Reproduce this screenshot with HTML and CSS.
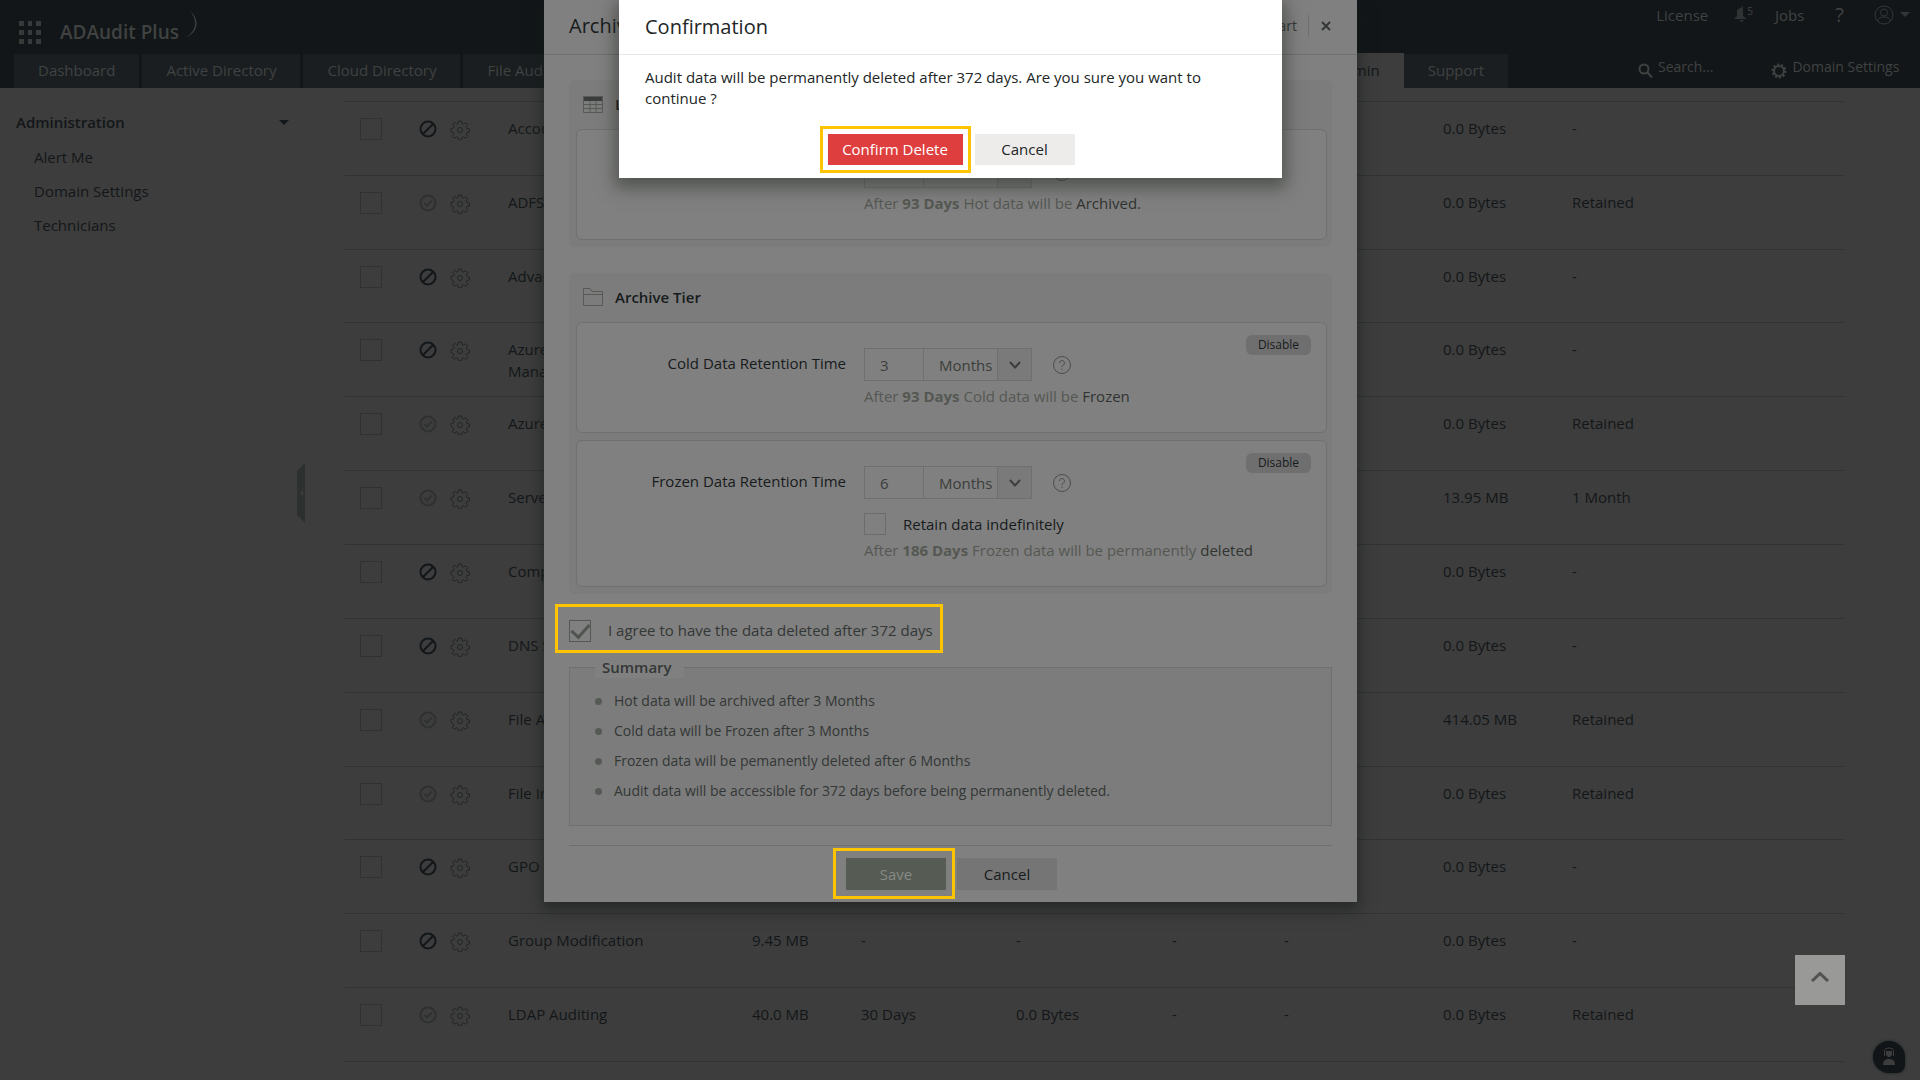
FILE: index.html
```html
<!DOCTYPE html>
<html lang="en">
<head>
  <meta charset="UTF-8">
  <meta name="viewport" content="width=device-width, initial-scale=1.0">
  <title>ADAudit Plus</title>
  <link rel="stylesheet" href="styles.css">
</head>
<body>
  <svg class="sprite" width="0" height="0">
    <symbol id="blocked" viewBox="0 0 18 18"><circle cx="9" cy="9" r="7.5"/><path d="M4.2 13.8L13.8 4.2"/></symbol>
    <symbol id="checked" viewBox="0 0 18 18"><circle cx="9" cy="9" r="7.5"/><path d="M5.5 9l2.5 2.5 5-5"/></symbol>
    <symbol id="gear" viewBox="0 0 20 20"><path d="M8.5 1h3l.5 2.5 1.6.7 2.2-1.5 2 2-1.5 2.2.7 1.6 2.4.5v3l-2.4.5-.7 1.6 1.5 2.2-2 2-2.2-1.5-1.6.7-.5 2.4h-3l-.5-2.4-1.6-.7-2.2 1.5-2-2 1.5-2.2-.7-1.6L1 11.500V8.500L3.500 8l.7-1.6L2.700 4.200l2-2L6.900 4.200 8 3.500z"/><circle cx="10" cy="10" r="2.500"/></symbol>
    <symbol id="chevron" viewBox="0 0 14 10"><path d="M2 2l5 5.500L12 2"/></symbol>
    <symbol id="help" viewBox="0 0 20 20"><circle cx="10" cy="10" r="8.500"/><path d="M7.500 8a2.500 2.500 0 1 1 3.700 2.200c-.8.5-1.200.9-1.200 1.800M10 13.500v1.500"/></symbol>
  </svg>

  <header class="header">
    <div class="top">
      <button class="apps" aria-label="Apps">
        <svg width="24" height="24" viewBox="0 0 24 24"><path d="M1 1h5v5H1zM10 1h4v5h-4zM18 1h5v5h-5zM1 10h5v5H1zM10 10h4v5h-4zM18 10h5v5h-5zM1 19h5v5H1zM10 19h4v5h-4zM18 19h5v5h-5z"/></svg>
      </button>
      <a class="logo" href="#">ADAudit Plus<svg width="14" height="28" viewBox="0 0 14 28"><path d="M7 0c10 8 9 22-6 27 13-6 14-18 6-27z"/></svg></a>
      <div class="user-links">
        <a href="#">License</a>
        <a class="bell" href="#" aria-label="Notifications">
          <svg width="18" height="17" viewBox="0 0 18 17"><path d="M0 13l3-3V6c0-3 2-4 4-4l2-2v10l4 3zM5 14h5l-2 2z"/></svg><sup>5</sup>
        </a>
        <a class="jobs" href="#">Jobs</a>
        <a class="question" href="#">?</a>
        <button class="account" aria-label="Account">
          <svg width="20" height="20" viewBox="0 0 20 20"><circle cx="10" cy="10" r="9"/><circle cx="10" cy="7.500" r="3.500"/><path d="M3.500 16c1-3 3-4 6.500-4s5.500 1 6.500 4"/></svg>
          <span class="caret"></span>
        </button>
      </div>
    </div>
    <div class="bar">
      <nav class="tabs">
        <a href="#">Dashboard</a>
        <a href="#">Active Directory</a>
        <a href="#">Cloud Directory</a>
        <a href="#">File Audit</a>
        <a class="active" href="#">Admin</a>
        <a href="#">Support</a>
      </nav>
      <div class="tools">
        <a href="#"><svg width="15" height="15" viewBox="0 0 15 15"><circle cx="6" cy="6" r="4.500"/><path d="M9.500 9.500l4.500 5"/></svg>Search...</a>
        <a href="#"><svg width="16" height="16" viewBox="0 0 16 16"><circle cx="8" cy="8" r="5"/><circle class="teeth" cx="8" cy="8" r="6.500"/></svg>Domain Settings</a>
      </div>
    </div>
  </header>

  <div class="page">
    <aside class="sidebar">
      <h2>Administration <span class="caret"></span></h2>
      <ul>
        <li><a href="#">Alert Me</a></li>
        <li><a href="#">Domain Settings</a></li>
        <li><a href="#">Technicians</a></li>
      </ul>
      <button class="collapse" aria-label="Collapse"><svg width="8" height="60" viewBox="0 0 8 60"><path d="M8 0v60L0 52V8z"/><path class="mark" d="M6 27v6l-3-3z"/></svg></button>
    </aside>
    <main>
      <table class="list">
        <colgroup>
          <col class="c-check"><col class="c-icons"><col class="c-name"><col class="c-size"><col class="c-hot"><col class="c-cold"><col class="c-frozen"><col class="c-days"><col class="c-total"><col>
        </colgroup>
        <tbody>
          <tr>
            <td><input type="checkbox" aria-label="Account Management"></td>
            <td><svg class="blocked"><use href="#blocked"/></svg><svg class="gear"><use href="#gear"/></svg></td>
            <td>Account Management</td><td></td><td></td><td></td><td></td><td></td><td>0.0 Bytes</td><td>-</td>
          </tr>
          <tr>
            <td><input type="checkbox" aria-label="ADFS Auditing"></td>
            <td><svg class="checked"><use href="#checked"/></svg><svg class="gear"><use href="#gear"/></svg></td>
            <td>ADFS Auditing</td><td></td><td></td><td></td><td></td><td></td><td>0.0 Bytes</td><td>Retained</td>
          </tr>
          <tr>
            <td><input type="checkbox" aria-label="Advanced Auditing"></td>
            <td><svg class="blocked"><use href="#blocked"/></svg><svg class="gear"><use href="#gear"/></svg></td>
            <td>Advanced Auditing</td><td></td><td></td><td></td><td></td><td></td><td>0.0 Bytes</td><td>-</td>
          </tr>
          <tr>
            <td><input type="checkbox" aria-label="Azure Account Management"></td>
            <td><svg class="blocked"><use href="#blocked"/></svg><svg class="gear"><use href="#gear"/></svg></td>
            <td>Azure Account<br>Management</td><td></td><td></td><td></td><td></td><td></td><td>0.0 Bytes</td><td>-</td>
          </tr>
          <tr>
            <td><input type="checkbox" aria-label="Azure Auditing"></td>
            <td><svg class="checked"><use href="#checked"/></svg><svg class="gear"><use href="#gear"/></svg></td>
            <td>Azure Auditing</td><td></td><td></td><td></td><td></td><td></td><td>0.0 Bytes</td><td>Retained</td>
          </tr>
          <tr>
            <td><input type="checkbox" aria-label="Server Auditing"></td>
            <td><svg class="checked"><use href="#checked"/></svg><svg class="gear"><use href="#gear"/></svg></td>
            <td>Server Auditing</td><td></td><td></td><td></td><td></td><td></td><td>13.95 MB</td><td>1 Month</td>
          </tr>
          <tr>
            <td><input type="checkbox" aria-label="Computer Management"></td>
            <td><svg class="blocked"><use href="#blocked"/></svg><svg class="gear"><use href="#gear"/></svg></td>
            <td>Computer Management</td><td></td><td></td><td></td><td></td><td></td><td>0.0 Bytes</td><td>-</td>
          </tr>
          <tr>
            <td><input type="checkbox" aria-label="DNS Server"></td>
            <td><svg class="blocked"><use href="#blocked"/></svg><svg class="gear"><use href="#gear"/></svg></td>
            <td>DNS Server</td><td></td><td></td><td></td><td></td><td></td><td>0.0 Bytes</td><td>-</td>
          </tr>
          <tr>
            <td><input type="checkbox" aria-label="File Audit"></td>
            <td><svg class="checked"><use href="#checked"/></svg><svg class="gear"><use href="#gear"/></svg></td>
            <td>File Audit</td><td></td><td></td><td></td><td></td><td></td><td>414.05 MB</td><td>Retained</td>
          </tr>
          <tr>
            <td><input type="checkbox" aria-label="File Integrity"></td>
            <td><svg class="checked"><use href="#checked"/></svg><svg class="gear"><use href="#gear"/></svg></td>
            <td>File Integrity</td><td></td><td></td><td></td><td></td><td></td><td>0.0 Bytes</td><td>Retained</td>
          </tr>
          <tr>
            <td><input type="checkbox" aria-label="GPO Management"></td>
            <td><svg class="blocked"><use href="#blocked"/></svg><svg class="gear"><use href="#gear"/></svg></td>
            <td>GPO Management</td><td></td><td></td><td></td><td></td><td></td><td>0.0 Bytes</td><td>-</td>
          </tr>
          <tr>
            <td><input type="checkbox" aria-label="Group Modification"></td>
            <td><svg class="blocked"><use href="#blocked"/></svg><svg class="gear"><use href="#gear"/></svg></td>
            <td>Group Modification</td><td>9.45 MB</td><td>-</td><td>-</td><td>-</td><td>-</td><td>0.0 Bytes</td><td>-</td>
          </tr>
          <tr>
            <td><input type="checkbox" aria-label="LDAP Auditing"></td>
            <td><svg class="checked"><use href="#checked"/></svg><svg class="gear"><use href="#gear"/></svg></td>
            <td>LDAP Auditing</td><td>40.0 MB</td><td>30 Days</td><td>0.0 Bytes</td><td>-</td><td>-</td><td>0.0 Bytes</td><td>Retained</td>
          </tr>
          <tr>
            <td></td><td></td><td></td><td></td><td></td><td></td><td></td><td></td><td></td><td></td>
          </tr>
        </tbody>
      </table>
    </main>
  </div>

  <!-- archive settings -->
  <div class="layer">
    <form class="modal">
      <div class="modal-head">
        <h1>Archive Settings</h1>
        <a href="#">Quick Start</a>
        <button type="button" class="close" aria-label="Close"><svg width="10" height="10" viewBox="0 0 10 10"><path d="M1 1l8 8M9 1L1 9"/></svg></button>
      </div>
      <div class="modal-body">
        <section class="tier">
          <h3><svg width="20" height="17" viewBox="0 0 20 17"><path class="fill" d="M0 0h20v5H0z"/><path d="M.5.5h19v16H.5zM.5 8.500h19M.5 12.500h19M7 5v11M13 5v11"/></svg>Live Tier</h3>
          <div class="card">
            <label for="hot">Hot Data Retention Time</label>
            <div class="field">
              <div class="line">
                <div class="period"><input id="hot" type="text" value="3"><select aria-label="Unit"><option>Months</option></select><span class="arrow"><svg width="14" height="10"><use href="#chevron"/></svg></span></div>
                <svg class="help"><use href="#help"/></svg>
              </div>
              <p>After <b>93 Days</b> Hot data will be <em>Archived.</em></p>
            </div>
          </div>
        </section>

        <section class="tier">
          <h3><svg width="20" height="18" viewBox="0 0 20 18"><path d="M.5 17.500V.5H7l2 3h10.500v14zM.5 6.500h19"/></svg>Archive Tier</h3>
          <div class="card">
            <label for="cold">Cold Data Retention Time</label>
            <div class="field">
              <div class="line">
                <div class="period"><input id="cold" type="text" value="3"><select aria-label="Unit"><option>Months</option></select><span class="arrow"><svg width="14" height="10"><use href="#chevron"/></svg></span></div>
                <svg class="help"><use href="#help"/></svg>
              </div>
              <p>After <b>93 Days</b> Cold data will be <em>Frozen</em></p>
            </div>
            <button type="button" class="disable">Disable</button>
          </div>
          <div class="card">
            <label for="frozen">Frozen Data Retention Time</label>
            <div class="field">
              <div class="line">
                <div class="period"><input id="frozen" type="text" value="6"><select aria-label="Unit"><option>Months</option></select><span class="arrow"><svg width="14" height="10"><use href="#chevron"/></svg></span></div>
                <svg class="help"><use href="#help"/></svg>
              </div>
              <div class="retain"><input id="retain" type="checkbox"><label for="retain">Retain data indefinitely</label></div>
              <p>After <b>186 Days</b> Frozen data will be permanently <em>deleted</em></p>
            </div>
            <button type="button" class="disable">Disable</button>
          </div>
        </section>

        <div class="agree">
          <input id="agree" type="checkbox" checked>
          <label for="agree">I agree to have the data deleted after 372 days</label>
        </div>

        <fieldset class="summary">
          <legend>Summary</legend>
          <ul>
            <li>Hot data will be archived after 3 Months</li>
            <li>Cold data will be Frozen after 3 Months</li>
            <li>Frozen data will be pemanently deleted after 6 Months</li>
            <li>Audit data will be accessible for 372 days before being permanently deleted.</li>
          </ul>
        </fieldset>

        <div class="actions">
          <span class="mark-box"><button type="button" class="btn save">Save</button></span>
          <button type="button" class="btn">Cancel</button>
        </div>
      </div>
    </form>
  </div>

  <!-- confirmation -->
  <div class="layer">
    <div class="confirm" role="dialog" aria-labelledby="confirm-title">
      <h2 id="confirm-title">Confirmation</h2>
      <p>Audit data will be permanently deleted after 372 days. Are you sure you want to continue ?</p>
      <div class="confirm-actions">
        <span class="mark-box"><button type="button" class="btn delete">Confirm Delete</button></span>
        <button type="button" class="btn">Cancel</button>
      </div>
    </div>
  </div>

  <button class="to-top" aria-label="Back to top"><svg width="18" height="10" viewBox="0 0 18 10"><path d="M1 9l8-7.500L17 9"/></svg></button>
  <button class="chat" aria-label="Chat"><svg width="14" height="20" viewBox="0 0 14 20"><path d="M4 4h6v4l-2 2H6L4 8z"/><path d="M1 18c0-4 2-6 6-6s6 2 6 6z"/><path class="band" d="M2.500 9V4c0-4 9-4 9 0v5"/></svg></button>
</body>
</html>
```

FILE: styles.css
```css
* {
  box-sizing: border-box;
}

body,
h1,
h2,
h3,
p,
ul,
fieldset,
legend {
  margin: 0;
  padding: 0;
  border: 0;
}

html,
body {
  height: 100%;
}

body {
  display: flex;
  flex-direction: column;
  overflow: hidden;
  position: relative;
  background: #3d3d3d;
  color: #131719;
  font: 15px/22px "Open Sans", "Noto Sans", sans-serif;
}

a {
  color: inherit;
  text-decoration: none;
}

ul {
  list-style: none;
}

button,
input,
select {
  font: inherit;
  color: inherit;
  margin: 0;
  border-radius: 0;
}

button {
  padding: 0;
  border: 0;
  background: none;
}

svg {
  display: block;
  flex: none;
  fill: none;
  stroke: currentColor;
}

.sprite {
  position: absolute;
}

em {
  font-style: normal;
}

input[type="checkbox"] {
  appearance: none;
  display: block;
  width: 22px;
  height: 22px;
  border: 1px solid #303232;
}

.caret {
  border: 5px solid transparent;
  border-top-color: currentColor;
  border-bottom: 0;
}

/* header */
.header {
  flex: none;
  background: #121618;
  color: #404242;
}
.top {
  display: flex;
  height: 53px;
  padding: 0 10px 0 18px;
}
.apps {
  align-self: flex-start;
  margin-top: 20px;
}
.apps svg {
  fill: #383a3a;
  stroke: none;
}
.logo {
  display: flex;
  margin: 11px 0 0 18px;
  font-size: 19px;
  font-weight: 600;
  line-height: 42px;
}
.logo svg {
  margin-left: 4px;
  fill: currentColor;
  stroke: none;
}
.user-links {
  display: flex;
  align-items: center;
  height: 29px;
  margin-left: auto;
}
.bell {
  display: flex;
  margin-left: 26px;
}
.bell svg {
  fill: #303333;
  stroke: none;
}
.bell sup {
  margin-left: -5px;
  font-size: 10px;
  line-height: 10px;
}
.jobs {
  margin-left: 22px;
}
.question {
  margin-left: 31px;
  font-size: 20px;
}
.account {
  display: flex;
  align-items: center;
  gap: 6px;
  margin-left: 30px;
  color: #333636;
}
.bar {
  display: flex;
  height: 35px;
}
.tabs {
  display: flex;
  flex: 1;
  gap: 3px;
  padding-left: 14px;
}
.tabs a {
  margin-top: 1px;
  padding: 0 24px;
  line-height: 32px;
  background: #1a1e20;
}
.tabs .active {
  margin: 0 -3px 0 auto;
  background: #3d3d3d;
  color: #131719;
  line-height: 34px;
}
.tools {
  display: flex;
  gap: 58px;
  width: 412px;
  padding-left: 130px;
  font-size: 14px;
  line-height: 28px;
}
.tools a {
  display: flex;
  gap: 5px;
}
.tools svg {
  margin-top: 10px;
  stroke-width: 2;
}
.tools .teeth {
  stroke-dasharray: 2 2;
}

/* page */
.page {
  display: flex;
  flex: 1;
  min-height: 0;
  overflow: hidden;
}
.sidebar {
  position: relative;
  width: 305px;
  flex: none;
  padding: 23px 16px 0;
}
.sidebar h2 {
  display: flex;
  justify-content: space-between;
  align-items: center;
  font-size: 15px;
  font-weight: 600;
}
.sidebar ul {
  padding: 7px 0 0 18px;
}
.sidebar li {
  line-height: 34px;
}
.collapse {
  position: absolute;
  right: 0;
  top: 375px;
}
.collapse svg {
  fill: #2c302f;
  stroke: none;
}
.collapse .mark {
  fill: #3d3d3d;
}
main {
  flex: 1;
  min-width: 0;
  padding: 13px 76px 0 40px;
}
.list {
  width: 100%;
  table-layout: fixed;
  border-collapse: collapse;
}
.list tr {
  height: 74px;
  border-top: 1px solid #313333;
}
.list tr:nth-child(7n+3) {
  height: 73px;
}
.list td {
  padding: 15px 0 0;
  vertical-align: top;
}
.list td:nth-child(-n+2) {
  padding-top: 16px;
}
.list td:first-child {
  padding-left: 15px;
}
.list svg {
  display: inline-block;
  vertical-align: top;
}
.c-check { width: 74px; }
.c-icons { width: 89px; }
.c-name { width: 244px; }
.c-size { width: 109px; }
.c-hot { width: 155px; }
.c-cold { width: 156px; }
.c-frozen { width: 112px; }
.c-days { width: 159px; }
.c-total { width: 129px; }
.blocked,
.checked {
  width: 18px;
  height: 18px;
  margin: 2px 13px 0 0;
  stroke-width: 2;
}
.checked {
  color: #2f3131;
}
.gear {
  width: 20px;
  height: 20px;
  margin-top: 2px;
  color: #212526;
}

/* modal */
.layer {
  position: absolute;
  inset: 0;
  display: flex;
  justify-content: center;
  align-items: flex-start;
  padding-right: 19px;
}
.modal {
  width: 813px;
  background: #808080;
  color: #171b1c;
  box-shadow: 0 6px 14px 2px rgba(20, 26, 24, .55);
}
.modal-head {
  display: flex;
  align-items: center;
  height: 55px;
  padding: 0 26px 2px 25px;
  border-bottom: 1px solid #6f6f6f;
}
.modal-head h1 {
  font-size: 20px;
  font-weight: 400;
}
.modal-head a {
  margin-left: auto;
  padding-right: 11px;
  border-right: 1px solid #6f6f6f;
  font-size: 14px;
  color: #333735;
}
.close {
  margin-left: 12px;
  color: #333735;
}
.close svg {
  stroke-width: 2;
}
.modal-body {
  padding: 25px 25px 3px;
}
.tier {
  display: flex;
  flex-direction: column;
  gap: 7px;
  margin-bottom: 26px;
  padding: 0 5px 7px 7px;
  border-radius: 6px;
  background: #7c7c7c;
}
.tier + .tier {
  margin-bottom: 10px;
}
.tier h3 {
  display: flex;
  align-items: center;
  gap: 12px;
  height: 42px;
  padding: 6px 0 0 7px;
  font-size: 15px;
  font-weight: 600;
}
.tier h3 svg {
  color: #575a55;
}
.tier h3 .fill {
  fill: #3a3d3b;
  stroke: none;
}
.card {
  position: relative;
  display: flex;
  gap: 18px;
  min-height: 111px;
  padding: 25px 0;
  border: 1px solid #707070;
  border-radius: 6px;
  background: #808080;
}
.card > label {
  width: 269px;
  line-height: 30px;
  text-align: right;
}
.line {
  display: flex;
  align-items: center;
  gap: 20px;
}
.period {
  display: flex;
  height: 33px;
  border: 1px solid #6f6f6f;
  color: #3b3e3b;
}
.period input {
  width: 59px;
  padding: 0 15px;
  border: 0;
  border-right: 1px solid #6f6f6f;
  background: none;
}
.period select {
  appearance: none;
  width: 73px;
  padding: 0 0 0 15px;
  border: 0;
  background: none;
}
.arrow {
  display: flex;
  align-items: center;
  justify-content: center;
  width: 34px;
  border-left: 1px solid #6f6f6f;
  background: #7a7a7a;
}
.arrow svg {
  stroke-width: 2;
}
.help {
  width: 20px;
  height: 20px;
  color: #4b4e4a;
}
.field p {
  margin-top: 4px;
  color: #555852;
}
.field em {
  color: #303431;
}
.retain {
  display: flex;
  align-items: center;
  gap: 17px;
  margin-top: 14px;
}
.retain input[type="checkbox"] {
  border-color: #6c6c6c;
}
.disable {
  position: absolute;
  top: 12px;
  right: 15px;
  width: 65px;
  border-radius: 6px;
  background: #6f6f6f;
  font-size: 12px;
  line-height: 20px;
}
.agree {
  display: flex;
  align-items: center;
  gap: 17px;
  width: 388px;
  height: 49px;
  margin-left: -14px;
  padding: 5px 0 0 11px;
  border: 3px solid #ffc400;
  color: #333735;
}
.agree label {
  margin-bottom: 3px;
}
.agree input[type="checkbox"] {
  display: flex;
  align-items: center;
  justify-content: center;
  border-color: #555852;
}
.agree input:checked::after {
  content: "";
  width: 8px;
  height: 15px;
  margin-bottom: 4px;
  border: solid #505450;
  border-width: 0 3px 3px 0;
  transform: rotate(42deg);
}
.summary {
  margin-top: 3px;
  padding: 8px 0 19px 25px;
  border: 1px solid #6f6f6f;
  background: #7c7c7c;
}
.summary legend {
  padding: 0 12px 0 7px;
  background: #808080;
  color: #333735;
  font-weight: 600;
}
.summary li {
  display: flex;
  align-items: center;
  gap: 12px;
  color: #333735;
  font-size: 14px;
  line-height: 30px;
}
.summary li::before {
  content: "";
  width: 7px;
  height: 7px;
  border-radius: 50%;
  background: #555a54;
}
.actions {
  display: flex;
  justify-content: center;
  align-items: center;
  gap: 2px;
  margin-top: 19px;
  padding: 2px 11px 0 0;
  border-top: 1px solid #6f6f6f;
}
.mark-box {
  padding: 6px 5px;
  border: 3px solid #ffc400;
}
.btn {
  display: block;
  width: 100px;
  line-height: 32px;
  background: #757575;
}
.save {
  background: #565b54;
  color: #868a84;
}
.actions .mark-box {
  padding: 7px 6px 6px 10px;
}

/* confirm */
.confirm {
  width: 663px;
  padding-bottom: 5px;
  background: #fff;
  color: #222626;
  box-shadow: 0 6px 16px 4px rgba(40, 48, 38, .55);
}
.confirm h2 {
  padding: 11px 26px;
  border-bottom: 1px solid #e8e8e8;
  font-size: 20px;
  font-weight: 400;
  line-height: 32px;
}
.confirm p {
  padding: 12px 60px 17px 26px;
  line-height: 21px;
}
.confirm-actions {
  display: flex;
  justify-content: center;
  align-items: center;
  gap: 4px;
  padding-right: 7px;
}
.confirm .btn {
  line-height: 31px;
  background: #edecea;
}
.confirm .mark-box {
  padding: 5px;
}
.confirm .delete {
  width: 135px;
  background: #de3e3e;
  color: #fff;
}

.to-top {
  position: absolute;
  right: 75px;
  bottom: 75px;
  display: flex;
  justify-content: center;
  width: 50px;
  height: 50px;
  padding-top: 17px;
  background: #999997;
  color: #50534f;
}
.to-top svg {
  stroke-width: 3;
}
.chat {
  position: absolute;
  right: 15px;
  bottom: 7px;
  display: flex;
  align-items: center;
  justify-content: center;
  width: 32px;
  height: 32px;
  border-radius: 16px 16px 8px 16px;
  background: #111517;
  box-shadow: 0 0 3px #1c2021;
  color: #3d3d3d;
}
.chat svg {
  fill: currentColor;
  stroke: none;
}
.chat .band {
  fill: none;
  stroke: currentColor;
}
```
